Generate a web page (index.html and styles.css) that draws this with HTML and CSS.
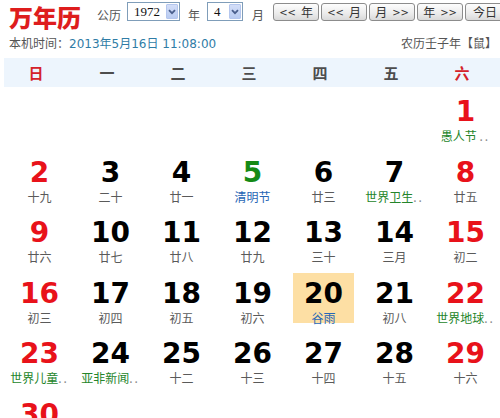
FILE: index.html
```html
<!DOCTYPE html>
<html lang="zh-CN">
<head>
<meta charset="utf-8">
<title>万年历</title>
<link rel="stylesheet" href="styles.css">
</head>
<body>
<div class="page">
  <div class="toolbar">
    <div class="title">万年历</div>
    <span class="lbl lbl-cal">公历</span>
    <span class="select sel-year"><span class="sel-text">1972</span><span class="sel-btn"><svg width="8" height="6" viewBox="0 0 8 6"><path d="M1 1.2 L4 4.2 L7 1.2" fill="none" stroke="#4a5f8c" stroke-width="1.8"/></svg></span></span>
    <span class="lbl lbl-year">年</span>
    <span class="select sel-month"><span class="sel-text">4</span><span class="sel-btn"><svg width="8" height="6" viewBox="0 0 8 6"><path d="M1 1.2 L4 4.2 L7 1.2" fill="none" stroke="#4a5f8c" stroke-width="1.8"/></svg></span></span>
    <span class="lbl lbl-month">月</span>
    <div class="btns">
      <button class="btn"><span class="arr arr-l">&lt;&lt;</span>年</button>
      <button class="btn"><span class="arr arr-l">&lt;&lt;</span>月</button>
      <button class="btn">月<span class="arr arr-r">&gt;&gt;</span></button>
      <button class="btn">年<span class="arr arr-r">&gt;&gt;</span></button>
      <button class="btn btn-today">今日</button>
    </div>
  </div>
  <div class="infoline">
    <div class="now">本机时间：<span class="now-val">2013年5月16日 11:08:00</span></div>
    <div class="lunar-year">农历壬子年【鼠】</div>
  </div>
  <div class="weekbar">
    <div class="wd wd-red">日</div>
    <div class="wd">一</div>
    <div class="wd">二</div>
    <div class="wd">三</div>
    <div class="wd">四</div>
    <div class="wd">五</div>
    <div class="wd wd-red">六</div>
  </div>
  <div class="grid">
    <div class="cell empty"></div>
    <div class="cell empty"></div>
    <div class="cell empty"></div>
    <div class="cell empty"></div>
    <div class="cell empty"></div>
    <div class="cell empty"></div>
    <div class="cell"><div class="num red">1</div><div class="lab fest">愚人节 <span class="dots">..</span></div></div>

    <div class="cell"><div class="num red">2</div><div class="lab">十九</div></div>
    <div class="cell"><div class="num">3</div><div class="lab">二十</div></div>
    <div class="cell"><div class="num">4</div><div class="lab">廿一</div></div>
    <div class="cell"><div class="num green">5</div><div class="lab term">清明节</div></div>
    <div class="cell"><div class="num">6</div><div class="lab">廿三</div></div>
    <div class="cell"><div class="num">7</div><div class="lab fest">世界卫生<span class="dots">..</span></div></div>
    <div class="cell"><div class="num red">8</div><div class="lab">廿五</div></div>

    <div class="cell"><div class="num red">9</div><div class="lab">廿六</div></div>
    <div class="cell"><div class="num">10</div><div class="lab">廿七</div></div>
    <div class="cell"><div class="num">11</div><div class="lab">廿八</div></div>
    <div class="cell"><div class="num">12</div><div class="lab">廿九</div></div>
    <div class="cell"><div class="num">13</div><div class="lab">三十</div></div>
    <div class="cell"><div class="num">14</div><div class="lab">三月</div></div>
    <div class="cell"><div class="num red">15</div><div class="lab">初二</div></div>

    <div class="cell"><div class="num red">16</div><div class="lab">初三</div></div>
    <div class="cell"><div class="num">17</div><div class="lab">初四</div></div>
    <div class="cell"><div class="num">18</div><div class="lab">初五</div></div>
    <div class="cell"><div class="num">19</div><div class="lab">初六</div></div>
    <div class="cell today"><div class="num">20</div><div class="lab term">谷雨</div></div>
    <div class="cell"><div class="num">21</div><div class="lab">初八</div></div>
    <div class="cell"><div class="num red">22</div><div class="lab fest">世界地球<span class="dots">..</span></div></div>

    <div class="cell"><div class="num red">23</div><div class="lab fest">世界儿童<span class="dots">..</span></div></div>
    <div class="cell"><div class="num">24</div><div class="lab fest">亚非新闻<span class="dots">..</span></div></div>
    <div class="cell"><div class="num">25</div><div class="lab">十二</div></div>
    <div class="cell"><div class="num">26</div><div class="lab">十三</div></div>
    <div class="cell"><div class="num">27</div><div class="lab">十四</div></div>
    <div class="cell"><div class="num">28</div><div class="lab">十五</div></div>
    <div class="cell"><div class="num red">29</div><div class="lab">十六</div></div>

    <div class="cell"><div class="num red">30</div><div class="lab">十七</div></div>
  </div>
</div>
</body>
</html>
```
FILE: styles.css
```css
html, body {
  margin: 0;
  padding: 0;
  overflow: hidden;
  background: #ffffff;
}
body {
  width: 500px;
  height: 418px;
  font-family: "DejaVu Sans", "Noto Sans CJK SC", sans-serif;
  font-size: 12px;
  color: #555;
}
.page {
  width: 500px;
  overflow: hidden;
}
.toolbar {
  display: flex;
  align-items: flex-start;
  padding: 2px 0 0 9px;
  height: 27px;
  white-space: nowrap;
}
.toolbar > * {
  flex-shrink: 0;
}
.title {
  font-family: "Noto Sans CJK SC", sans-serif;
  font-weight: 900;
  font-size: 24px;
  line-height: 24px;
  color: #de1d1d;
  margin-top: 3px;
  width: 74px;
}
.lbl {
  font-family: "Noto Sans CJK SC", sans-serif;
  font-size: 12px;
  line-height: 19px;
  margin-top: 3px;
  color: #555;
}
.lbl-cal {
  margin-left: 14px;
  margin-right: 6px;
}
.lbl-year {
  margin-left: 8px;
  margin-right: 7px;
}
.lbl-month {
  margin-left: 9px;
  margin-right: 9px;
}
.select {
  display: flex;
  align-items: stretch;
  box-sizing: border-box;
  height: 19px;
  border: 1px solid #7f9db9;
  background: #fff;
  padding: 1px;
}
.sel-year { width: 53px; }
.sel-month { width: 36px; }
.sel-text {
  flex: 1;
  font-family: "Liberation Serif", serif;
  font-size: 13px;
  line-height: 15px;
  color: #111;
  padding-left: 5px;
}
.sel-btn {
  width: 12px;
  display: flex;
  align-items: center;
  justify-content: center;
  background: linear-gradient(#d3def8, #b9cbf1);
  border: 1px solid #b4c6ee;
  box-sizing: border-box;
  border-radius: 1px;
}
.btns {
  display: flex;
  gap: 2px;
  margin-top: 1px;
}
.btn {
  flex-shrink: 0;
  box-sizing: border-box;
  width: 46px;
  height: 18px;
  padding: 0;
  border: 1px solid #8c8c8c;
  border-radius: 3px;
  background: linear-gradient(#fdfdfd, #ebebeb 60%, #d9d9d9);
  font-family: "Noto Sans CJK SC", sans-serif;
  font-size: 12px;
  line-height: 16px;
  color: #333;
  white-space: nowrap;
}
.btn-today {
  width: 40px;
}
.arr {
  font-family: "DejaVu Sans", sans-serif;
  font-size: 10px;
  letter-spacing: 0;
  vertical-align: 1px;
}
.arr-l {
  margin-right: 5px;
}
.arr-r {
  margin-left: 5px;
}
.infoline {
  display: flex;
  justify-content: space-between;
  align-items: center;
  margin-top: 6px;
  padding: 0 3px 0 9px;
  height: 16px;
  line-height: 16px;
  white-space: nowrap;
}
.now {
  font-family: "Noto Sans CJK SC", sans-serif;
  color: #555;
}
.now-val {
  font-family: "DejaVu Sans", "Noto Sans CJK SC", sans-serif;
  color: #2f7ca6;
}
.lunar-year {
  font-family: "Noto Sans CJK SC", sans-serif;
  color: #555;
}
.weekbar {
  display: grid;
  grid-template-columns: repeat(7, 71px);
  margin-top: 7px;
  margin-left: 4px;
  height: 29px;
  background: #edf5fd;
}
.wd {
  font-family: "Noto Sans CJK SC", sans-serif;
  font-weight: bold;
  font-size: 15px;
  line-height: 29px;
  text-align: center;
  padding-right: 7px;
  color: #4d4d4d;
}
.wd-red {
  color: #d4222a;
}
.grid {
  display: grid;
  grid-template-columns: repeat(7, 71px);
  grid-auto-rows: 50px;
  row-gap: 10.6px;
  margin-top: 4px;
  margin-left: 4px;
}
.cell {
  margin: 0 5px;
  padding-top: 4px;
  text-align: center;
  box-sizing: border-box;
}
.today {
  background: #fddfa4;
}
.num {
  font-family: "DejaVu Sans", sans-serif;
  font-weight: bold;
  font-size: 28px;
  line-height: 33px;
  color: #000;
}
.num.red { color: #e8121a; }
.num.green { color: #158a15; }
.lab {
  font-family: "Noto Sans CJK SC", sans-serif;
  font-size: 12px;
  line-height: 14px;
  margin-top: 1px;
  color: #5a5a5a;
  white-space: nowrap;
}
.lab.fest { color: #24852a; }
.lab.term { color: #2766b5; }
.dots {
  letter-spacing: 2px;
  color: #8a8a8a;
}
```
